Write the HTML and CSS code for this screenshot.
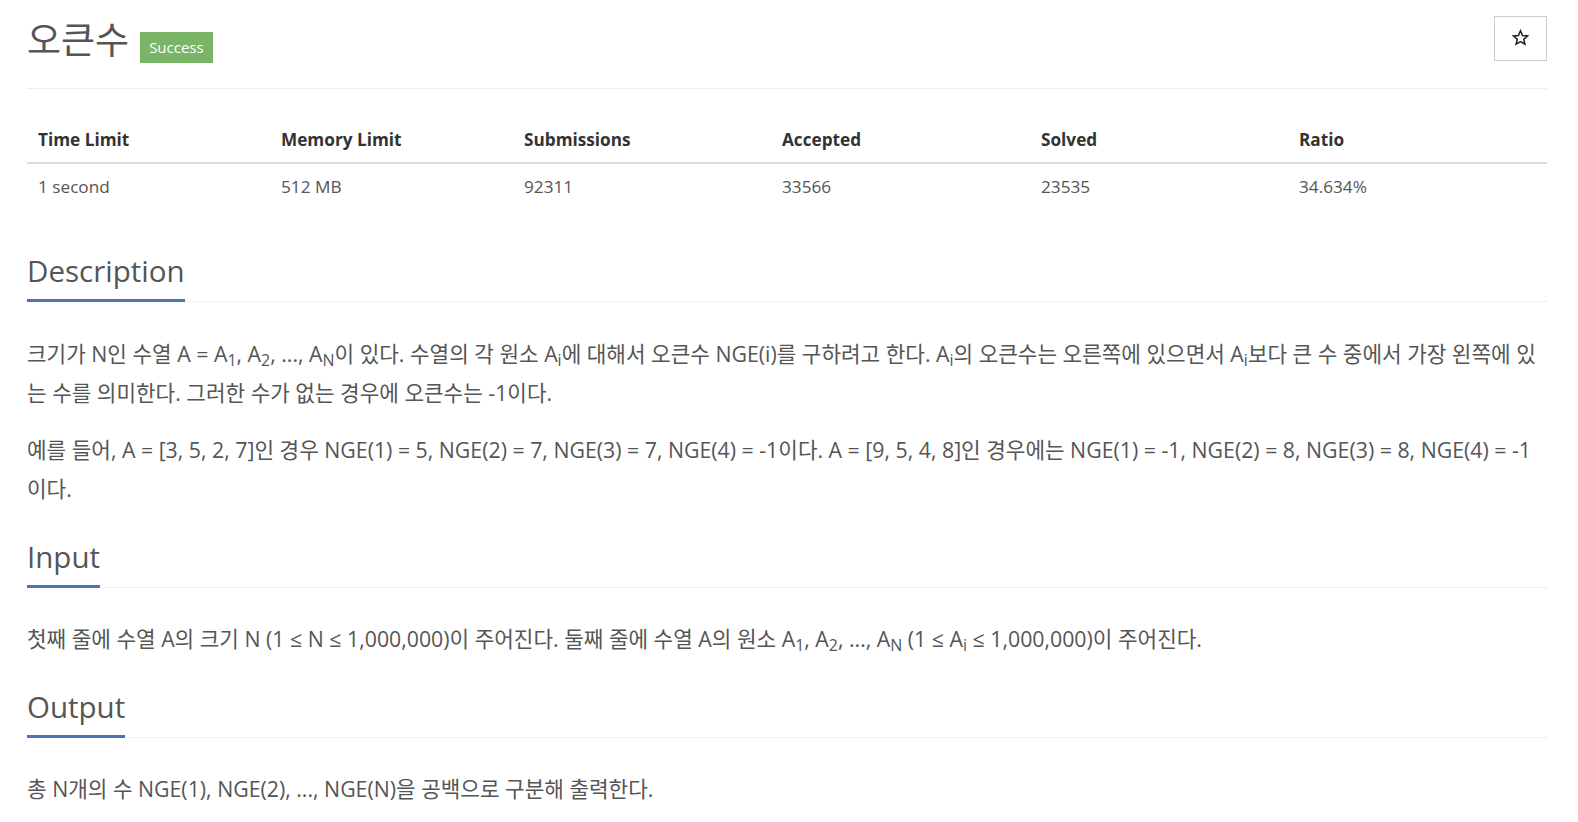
FILE: index.html
```html
<!DOCTYPE html>
<html lang="ko">
<head>
<meta charset="utf-8">
<title>오큰수</title>
<link rel="stylesheet" href="styles.css">
</head>
<body>
<div class="page">
  <header class="page-header">
    <h1 class="title">오큰수 <span class="label-success">Success</span></h1>
    <button class="star-btn" type="button" aria-label="star">
      <svg width="17" height="17" viewBox="0 0 24 24"><path d="M12 2.5l2.9 6.6 7.1.6-5.4 4.7 1.6 7-6.2-3.7-6.2 3.7 1.6-7L2 9.7l7.1-.6z" fill="none" stroke="#222" stroke-width="2.2" stroke-linejoin="miter"/></svg>
    </button>
  </header>

  <table class="info">
    <colgroup>
      <col class="c1"><col class="c2"><col class="c3"><col class="c4"><col class="c5"><col class="c6">
    </colgroup>
    <thead>
      <tr><th>Time Limit</th><th>Memory Limit</th><th>Submissions</th><th>Accepted</th><th>Solved</th><th>Ratio</th></tr>
    </thead>
    <tbody>
      <tr><td>1 second</td><td>512 MB</td><td>92311</td><td>33566</td><td>23535</td><td>34.634%</td></tr>
    </tbody>
  </table>

  <section class="section">
    <div class="headline"><h2>Description</h2></div>
    <p>크기가 N인 수열 A = A<sub>1</sub>, A<sub>2</sub>, ..., A<sub>N</sub>이 있다. 수열의 각 원소 A<sub>i</sub>에 대해서 오큰수 NGE(i)를 구하려고 한다. A<sub>i</sub>의 오큰수는 오른쪽에 있으면서 A<sub>i</sub>보다 큰 수 중에서 가장 왼쪽에 있는 수를 의미한다. 그러한 수가 없는 경우에 오큰수는 -1이다.</p>
    <p>예를 들어, A = [3, 5, 2, 7]인 경우 NGE(1) = 5, NGE(2) = 7, NGE(3) = 7, NGE(4) = -1이다. A = [9, 5, 4, 8]인 경우에는 NGE(1) = -1, NGE(2) = 8, NGE(3) = 8, NGE(4) = -1이다.</p>
  </section>

  <section class="section">
    <div class="headline"><h2>Input</h2></div>
    <p>첫째 줄에 수열 A의 크기 N (1 ≤ N ≤ 1,000,000)이 주어진다. 둘째 줄에 수열 A의 원소 A<sub>1</sub>, A<sub>2</sub>, ..., A<sub>N</sub> (1 ≤ A<sub>i</sub> ≤ 1,000,000)이 주어진다.</p>
  </section>

  <section class="section">
    <div class="headline"><h2>Output</h2></div>
    <p>총 N개의 수 NGE(1), NGE(2), ..., NGE(N)을 공백으로 구분해 출력한다.</p>
  </section>
</div>
</body>
</html>
```

FILE: styles.css
```css
* { box-sizing: border-box; }

body {
  margin: 0;
  background: #fff;
  color: #555;
  font-family: "Open Sans", "Noto Sans CJK KR", sans-serif;
}

.page {
  padding: 0 31px 0 27px;
}

.page-header {
  display: flex;
  justify-content: space-between;
  align-items: flex-start;
  padding-top: 16px;
  height: 89px;
  border-bottom: 1px solid #eee;
}

.title {
  margin: 0;
  font-size: 37px;
  font-weight: 400;
  line-height: 44px;
  color: #555;
  display: flex;
  align-items: center;
  gap: 11px;
}

.label-success {
  display: inline-block;
  margin-top: 16px;
  background: #7ab466;
  color: #fff;
  font-size: 15px;
  line-height: 31px;
  height: 31px;
  padding: 0 9px;
  font-family: "Open Sans", sans-serif;
}

.star-btn {
  width: 53px;
  height: 45px;
  border: 1px solid #ccc;
  background: #fff;
  display: flex;
  align-items: center;
  justify-content: center;
  padding: 0 0 2px;
}

.info {
  width: 100%;
  border-collapse: collapse;
  margin-top: 28px;
  margin-bottom: 41px;
  font-size: 17.2px;
}
.info .c1 { width: 243px; }
.info .c2 { width: 243px; }
.info .c3 { width: 258px; }
.info .c4 { width: 259px; }
.info .c5 { width: 258px; }

.info th {
  text-align: left;
  font-weight: 700;
  color: #333;
  padding: 12px 10px 11px 11px;
  border-bottom: 2px solid #ddd;
  line-height: 22px;
}
.info td {
  padding: 12px 10px 12px 11px;
  line-height: 22px;
  color: #555;
}

.headline {
  border-bottom: 1px dotted #e4e4e4;
  margin-top: 28px;
  margin-bottom: 31.5px;
}
.headline h2 {
  display: inline-block;
  margin: 0 0 -1px;
  font-size: 29.5px;
  font-weight: 400;
  line-height: 40px;
  padding-bottom: 8px;
  color: #555;
  border-bottom: 3px solid #4b74b7;
}

.section p {
  margin: 0 0 17px;
  font-size: 21.3px;
  line-height: 39.5px;
}

sub {
  font-size: 75%;
  line-height: 0;
  vertical-align: -0.25em;
}
```
